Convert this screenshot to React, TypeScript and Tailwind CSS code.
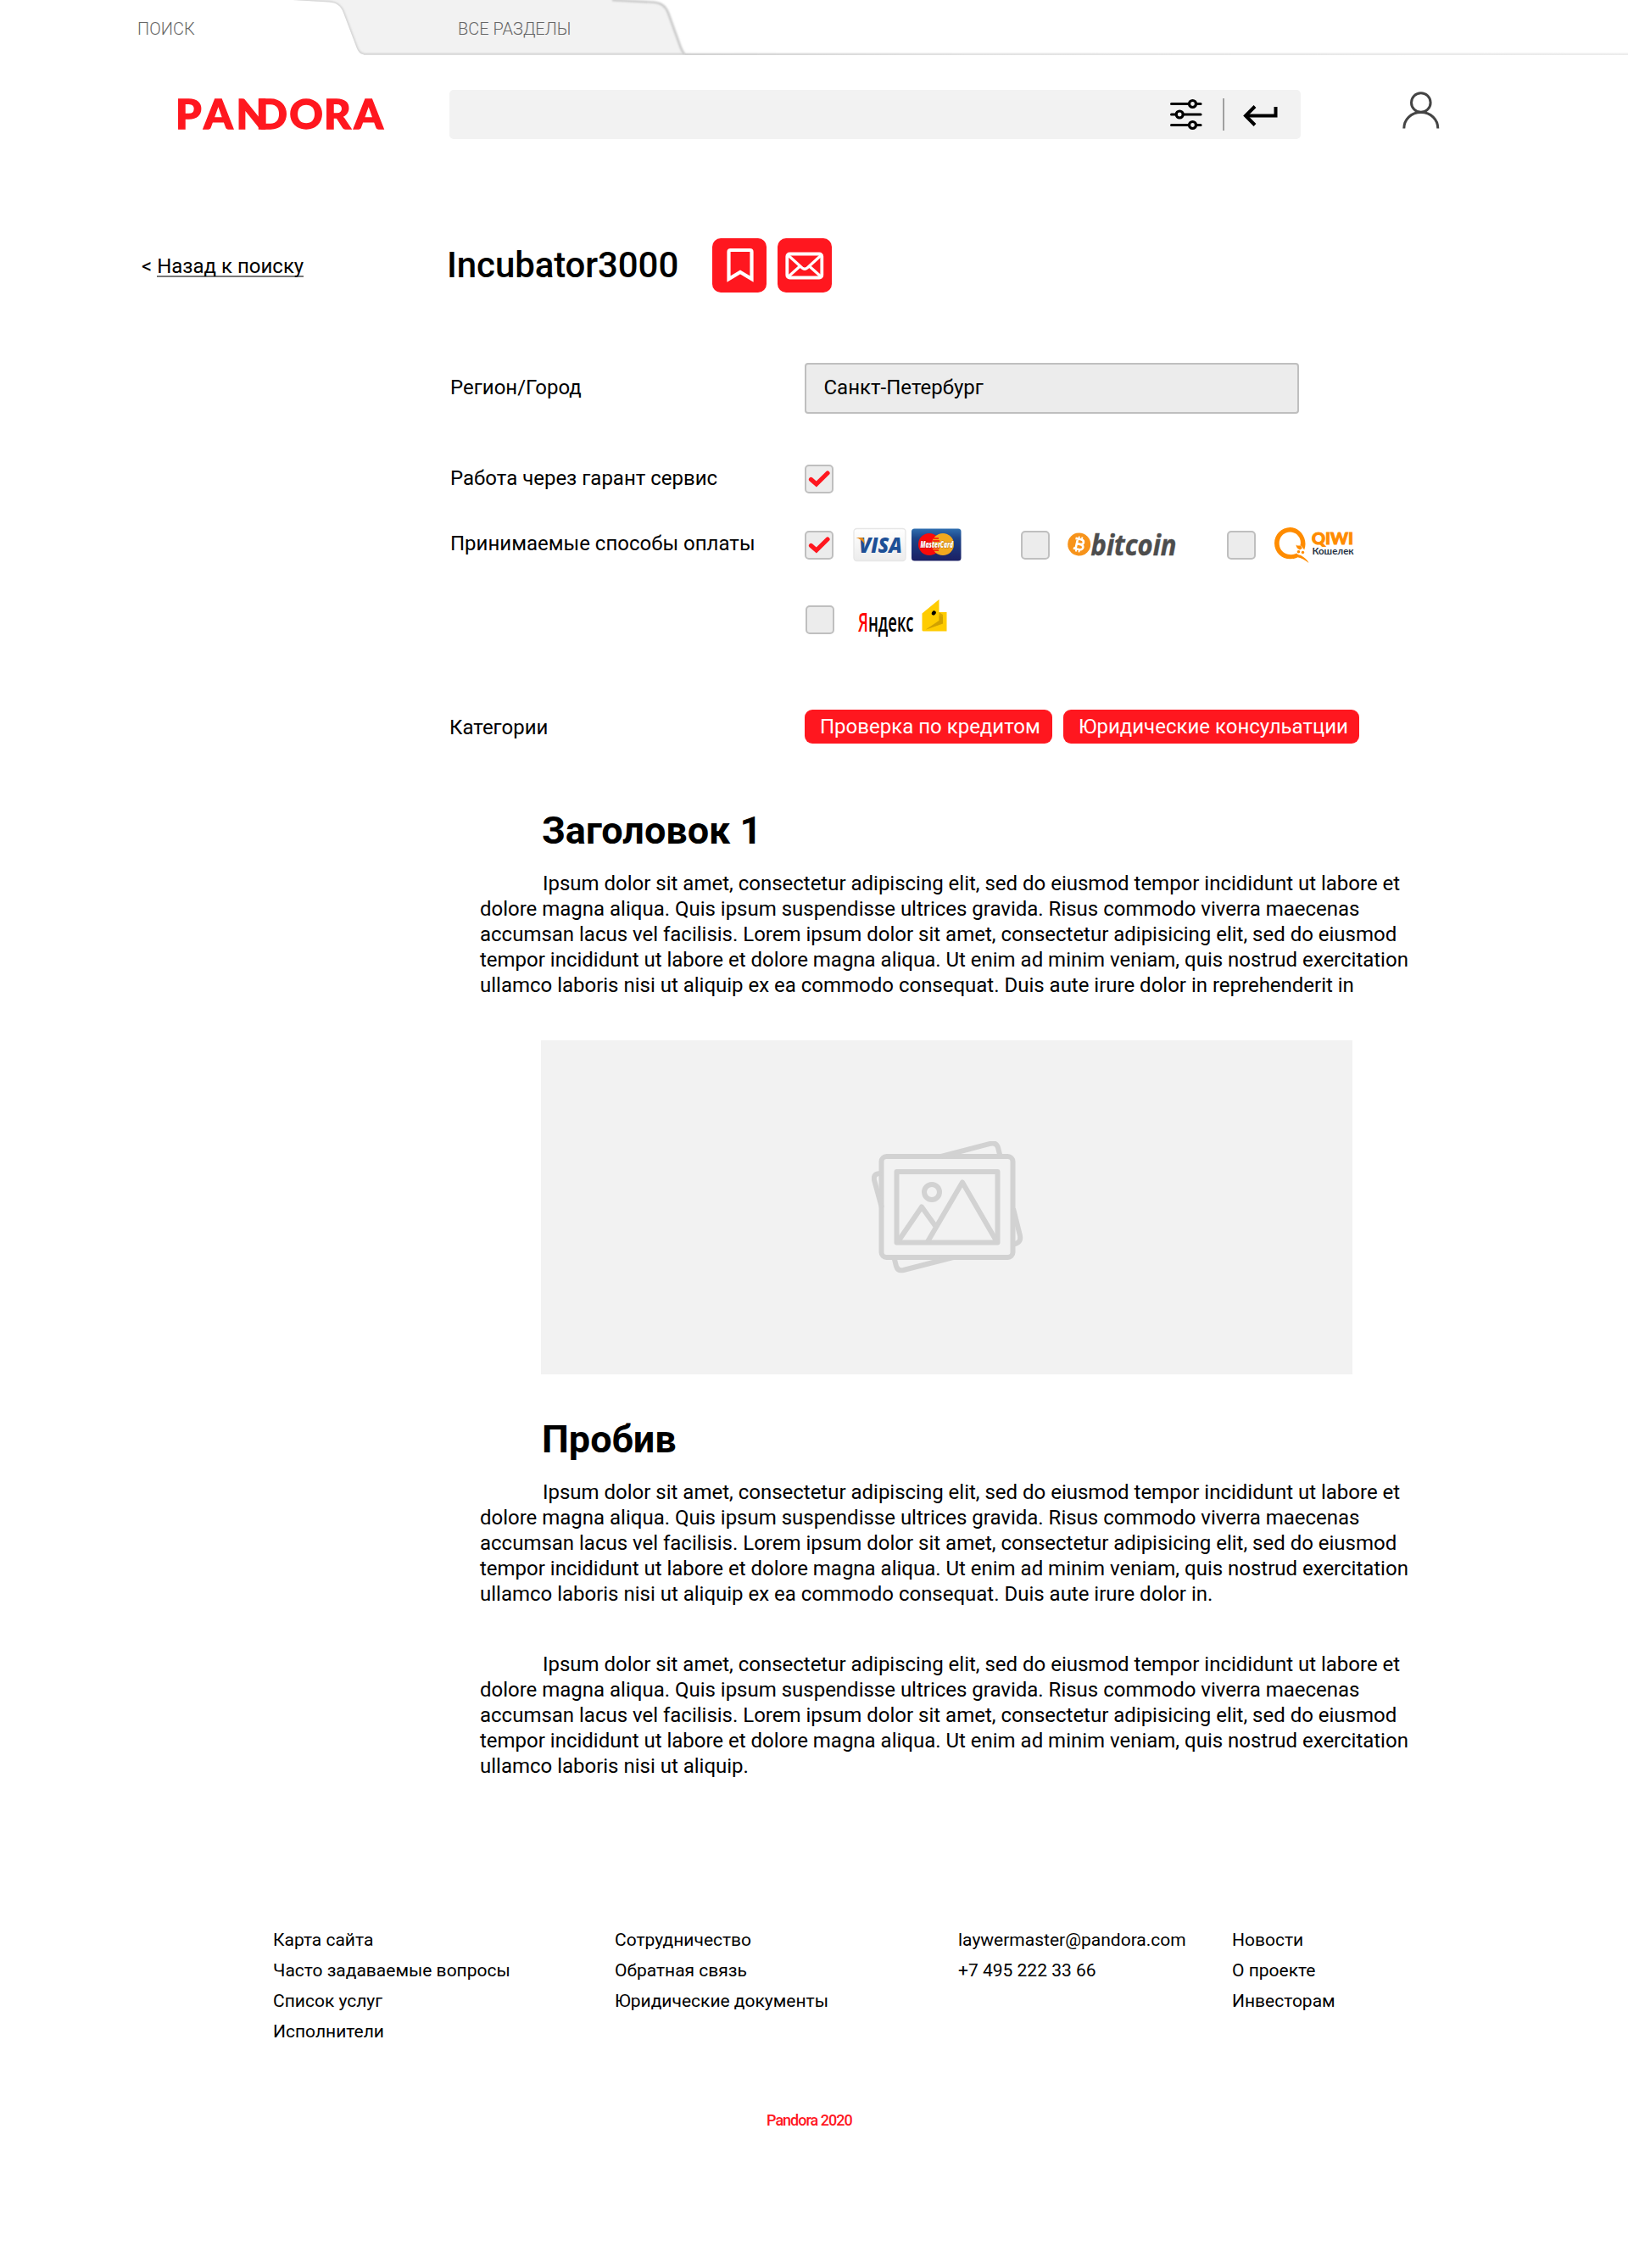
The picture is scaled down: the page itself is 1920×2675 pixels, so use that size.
import React from "react";

const RED = "#ff171f";

const FIRST_EDGE = "M345 0L388 2.6C397 3.2 402 7 405 15L420.500 56C423 62.500 426 64.500 431 64.500";
const SECOND_EDGE = "M722 0L771 2.600C780 3.200 785 7 788 15L801 51C803 57 805 62 808 64.500";

function TabsBackground() {
  return (
    <svg className="absolute inset-0" width="1920" height="66" viewBox="0 0 1920 66" fill="none">
      <defs>
        <linearGradient id="rule" x1="0" x2="1920" y1="0" y2="0" gradientUnits="userSpaceOnUse">
          <stop offset="0.420" stopColor="#c4c4c4" />
          <stop offset="0.600" stopColor="#dadada" />
          <stop offset="1" stopColor="#e6e6e6" />
        </linearGradient>
        <filter id="soft" filterUnits="userSpaceOnUse" x="300" y="-10" width="1640" height="90">
          <feGaussianBlur stdDeviation="1.300" />
        </filter>
        <clipPath id="tab">
          <path d={`${FIRST_EDGE}H808C805 62 803 57 801 51L788 15C785 7 780 3.200 771 2.600L722 0Z`} />
        </clipPath>
        <clipPath id="above">
          <rect width="1920" height="64.700" />
        </clipPath>
      </defs>
      <path d={`${FIRST_EDGE}H808C805 62 803 57 801 51L788 15C785 7 780 3.200 771 2.600L722 0Z`} fill="#f2f2f2" />
      <g clipPath="url(#tab)">
        <path d={`${FIRST_EDGE}H815`} stroke="#d0d0d0" strokeWidth="3" filter="url(#soft)" />
      </g>
      <g clipPath="url(#above)">
        <path d={`${SECOND_EDGE}H1925`} stroke="url(#rule)" strokeWidth="2.400" filter="url(#soft)" />
        <path d="M808 64.200H1920" stroke="url(#rule)" strokeWidth="1" />
        <path d="M429 64.200H808" stroke="#d6d6d6" strokeWidth="1" />
      </g>
    </svg>
  );
}

function Logo() {
  return (
    <svg className="overflow-visible" width="250" height="58" viewBox="0 0 250 58" aria-label="PANDORA">
      <text transform="scale(1.03 1)" y="45.600" x="-2.900 29.300 66.500 89 127.500 167 201.500" fontFamily="Lato" fontWeight="900" fontSize="47.500" fill={RED} stroke={RED} strokeWidth="1.300">
        PANDORA
      </text>
    </svg>
  );
}

function Sliders() {
  return (
    <svg width="38" height="38" viewBox="0 0 38 38" fill="none" stroke="#000" strokeWidth="3.200" strokeLinecap="round">
      <path d="M1.600 6.500H22M31 6.500H36M1.600 19H6.500M16 19H36M1.600 31.500H22M31 31.500H36" />
      <circle cx="26.500" cy="6.500" r="4" />
      <circle cx="11.200" cy="19" r="4" />
      <circle cx="26.500" cy="31.500" r="4" />
    </svg>
  );
}

function ReturnArrow() {
  return (
    <svg width="42" height="26" viewBox="0 0 42 26" fill="none" stroke="#000" strokeWidth="4">
      <path d="M38.500 2V12.500H4" />
      <path d="M14 1.500L3 12.500L14 23.500" />
    </svg>
  );
}

function UserIcon() {
  return (
    <svg width="44" height="44" viewBox="0 0 44 44" fill="none" stroke="#444" strokeWidth="3">
      <circle cx="21.800" cy="13" r="11.300" />
      <path d="M1.800 43.500C1.800 33 10 24.500 21.800 24.500S41.800 33 41.800 43.500" />
    </svg>
  );
}

function Checkbox({ checked = false }: { checked?: boolean }) {
  return (
    <span className="flex h-[34px] w-[34px] shrink-0 items-center justify-center rounded-[5px] border-2 border-[#bfbfbf] bg-[#ececec]">
      {checked && (
        <svg width="26" height="22" viewBox="0 0 26 22" fill="none" stroke={RED} strokeWidth="5.200">
          <path d="M3.500 11.500L9.800 17L23 4" strokeLinecap="round" strokeLinejoin="miter" />
        </svg>
      )}
    </span>
  );
}

function Cards() {
  return (
    <svg className="overflow-visible" width="130" height="42" viewBox="0 0 130 42">
      <defs>
        <linearGradient id="visa" x1="0" x2="0" y1="0" y2="1">
          <stop offset="0" stopColor="#ffffff" />
          <stop offset="1" stopColor="#ececec" />
        </linearGradient>
        <linearGradient id="mc" x1="0" x2="0" y1="0" y2="1">
          <stop offset="0" stopColor="#2f6fb0" />
          <stop offset="0.300" stopColor="#1d4488" />
          <stop offset="1" stopColor="#1b1f63" />
        </linearGradient>
      </defs>
      <rect x="1" y="1.500" width="61" height="38" rx="3.500" fill="url(#visa)" stroke="#e6e6e6" strokeWidth="1.300" />
      <text x="7" y="29.500" fontFamily="Open Sans" fontWeight="800" fontStyle="italic" fontSize="24.500" fill="#1d4f96" textLength="51" lengthAdjust="spacingAndGlyphs">
        VISA
      </text>
      <path d="M3.500 12H10C12 12 12.600 13 13 15L14 20.500C12 16.500 9 14 3.500 12Z" fill="#e58a1a" />
      <rect x="69" y="1.500" width="58.500" height="38" rx="3.500" fill="url(#mc)" />
      <circle cx="90" cy="20" r="13" fill="#fb0a0a" />
      <circle cx="106" cy="20" r="13" fill="#f2a91e" />
      <path d="M95 13H101M94 16H102M94 24H102M95 27H101" stroke="#fb0a0a" strokeWidth="1.500" />
      <text x="79.500" y="24" fontFamily="Open Sans" fontWeight="800" fontStyle="italic" fontSize="10.500" fill="#fff" stroke="#4a1010" strokeWidth="1" strokeOpacity="0.400" paintOrder="stroke" textLength="38.500" lengthAdjust="spacingAndGlyphs">
        MasterCard
      </text>
    </svg>
  );
}

function Bitcoin() {
  return (
    <svg className="overflow-visible" width="132" height="48" viewBox="0 -7 132 48">
      <circle cx="13.700" cy="16" r="13.500" fill="#f7931a" />
      <g transform="rotate(13 13.700 16)" fill="none" stroke="#fff" strokeWidth="2.600">
        <path d="M8 10H14.500C19.500 10 19.500 15.700 14.500 15.700H10.500M14.500 15.700C20.500 15.700 20.500 22 14.500 22H8M10.700 10V22" />
        <path d="M11.800 6.800V10M15.500 6.800V10M11.800 22V25.200M15.500 22V25.200" strokeWidth="1.900" />
      </g>
      <text x="27.500" y="28.500" fontFamily="Open Sans" fontWeight="700" fontStyle="italic" fontSize="34" fill="#4d4d4d" stroke="#4d4d4d" strokeWidth="0.500" textLength="101" lengthAdjust="spacingAndGlyphs">
        bitcoin
      </text>
    </svg>
  );
}

function Qiwi() {
  return (
    <svg width="96" height="44" viewBox="0 0 96 44">
      <path
        fillRule="evenodd"
        fill="#ff8c00"
        d="M18.700 0C8.300 0 0 8.300 0 18.700S8.300 37.300 18.700 37.300C22 37.300 25 36.500 27.500 35.200C32 36.500 36.500 38.500 40.500 42C39 38.500 35.500 35.500 32 33.500C29.500 32 27 32.500 26.500 30.500C22 33 16.500 32.500 12.500 30.500C3 25.500 3.500 10.500 13.500 6.500C24 2.500 33 12 30.500 21L32 22.300L35.200 26.500C40 14 31 0 18.700 0Z"
      />
      <circle cx="28.500" cy="28.800" r="1.800" fill="#ff8c00" />
      <circle cx="33.500" cy="29.500" r="1.700" fill="#ff8c00" />
      <path d="M25.500 20.500C27 22 29 21.500 31 21.500L33 24.500L30 26.500C27.500 25.500 25.500 23.500 25.500 20.500Z" fill="#ff8c00" />
      <text x="44" y="20" fontFamily="Lato" fontWeight="900" fontSize="19.500" fill="#ff8c00" stroke="#ff8c00" strokeWidth="1" textLength="49" lengthAdjust="spacingAndGlyphs">
        QIWI
      </text>
      <text x="44.500" y="32.300" fontFamily="Lato" fontWeight="700" fontSize="11.500" fill="#273345" textLength="49" lengthAdjust="spacingAndGlyphs">
        Кошелек
      </text>
    </svg>
  );
}

function Yandex() {
  return (
    <svg className="overflow-visible" width="110" height="44" viewBox="0 0 110 44">
      <text x="0" y="38.500" fontFamily="Open Sans" fontWeight="600" fontSize="30.500" fill="#000" textLength="65.500" lengthAdjust="spacingAndGlyphs">
        <tspan fill="#ff0000">Я</tspan>ндекс
      </text>
      <path d="M75.500 17.500L95.500 1V16H104.500V38.500H76.500L75.500 37.500Z" fill="#ffcc00" />
      <path d="M95.500 16L100 19V29.500L80 36.500L95.500 26Z" fill="#d9a800" />
      <path d="M80 36.500L95.500 26V20L100 22V29.500Z" fill="#c79a00" opacity="0.500" />
      <ellipse cx="89.300" cy="17" rx="2.300" ry="2.800" transform="rotate(35 89.300 17)" fill="#000" />
    </svg>
  );
}

function Gallery() {
  return (
    <svg width="180" height="160" viewBox="0 0 180 160" fill="none" stroke="#d2d2d2" strokeWidth="6" strokeLinejoin="round">
      <rect x="11.500" y="18" width="155" height="119" rx="6" />
      <rect x="29.500" y="36" width="119" height="83.500" />
      <circle cx="71" cy="60" r="9" />
      <path d="M31 118.500L59 77.500L75.500 100.500M66 118.500L107 48.500L147 117.500" />
      <path d="M82 18L140.500 2.700Q147 1.300 149 7.500L151.500 17.500" />
      <path d="M96 137L37.500 152Q31 153.500 29 147.500L26.500 137.500" />
      <path d="M11.500 38Q1 37.500 3.200 46.500L12 78.500" />
      <path d="M167 79.500L175 111.500Q176.500 120 167.500 121.500" />
    </svg>
  );
}

const PARA = [
  "Ipsum dolor sit amet, consectetur adipiscing elit, sed do eiusmod tempor incididunt ut labore et",
  "dolore magna aliqua. Quis ipsum suspendisse ultrices gravida. Risus commodo viverra maecenas",
  "accumsan lacus vel facilisis. Lorem ipsum dolor sit amet, consectetur adipisicing elit, sed do eiusmod",
  "tempor incididunt ut labore et dolore magna aliqua. Ut enim ad minim veniam, quis nostrud exercitation",
];

function Paragraph({ last, className }: { last: string; className: string }) {
  return (
    <p className={`ml-[566px] w-[1120px] indent-[74px] text-[24px] leading-[30px] tracking-[-0.008px] whitespace-nowrap ${className}`}>
      {[...PARA, last].map((line, i) => (
        <React.Fragment key={i}>
          {i > 0 && <br />}
          {line}
        </React.Fragment>
      ))}
    </p>
  );
}

function FooterColumn({ items, className }: { items: string[]; className: string }) {
  return (
    <ul className={`text-[21px] leading-[36px] whitespace-nowrap ${className}`}>
      {items.map((t) => (
        <li key={t}>{t}</li>
      ))}
    </ul>
  );
}

export default function App() {
  return (
    <div className="h-[2675px] w-[1920px] overflow-hidden bg-white font-['Roboto',sans-serif] text-black">
      <nav className="relative flex h-[65px] text-[20px] leading-[24px] font-light text-[#666]">
        <TabsBackground />
        <a className="relative mt-[22px] ml-[162px] w-[378px]">ПОИСК</a>
        <a className="relative mt-[22px]">ВСЕ РАЗДЕЛЫ</a>
      </nav>

      <header className="mt-[41px] flex h-[58px] items-start pl-[210px]">
        <div className="w-[320px]">
          <Logo />
        </div>
        <div className="flex h-[58px] w-[1004px] items-center rounded-[5px] bg-[#f2f2f2] pl-[850px]">
          <Sliders />
          <span className="ml-6 h-[38px] w-[2px] bg-[#a0a0a0]" />
          <span className="ml-[22px] mt-[3px]">
            <ReturnArrow />
          </span>
        </div>
        <div className="mt-[2px] ml-[120px]">
          <UserIcon />
        </div>
      </header>

      <section className="mt-[117px] flex h-16 items-center pl-[167px] whitespace-nowrap">
        <div className="mt-[2px] w-[360px] text-[24px] leading-[30px]">
          &lt; <a className="inline-block h-[28px] border-b-2 border-[#777]">Назад к поиску</a>
        </div>
        <h1 className="w-[313px] text-[42px] leading-[50px] font-medium tracking-[-0.1px]">Incubator3000</h1>
        <button className="flex h-16 w-16 items-center justify-center rounded-[10px] bg-[#ff171f] pl-px">
          <svg width="34" height="42" viewBox="0 0 34 42" fill="none" stroke="#fff" strokeWidth="4.200">
            <path d="M3.500 37V5Q3.500 3 5.500 3H28.500Q30.500 3 30.500 5V37L17 29Z" />
          </svg>
        </button>
        <button className="ml-[13px] flex h-16 w-16 items-center justify-center rounded-[10px] bg-[#ff171f]">
          <svg width="46" height="34" viewBox="0 0 46 34" fill="none" stroke="#fff" strokeWidth="3.800">
            <rect x="2.300" y="3.500" width="41" height="28" rx="3" />
            <path d="M3.500 5L20 20Q23 22.500 26 20L42.500 5M3.500 30.500L17.500 18M42.500 30.500L28.500 18" strokeWidth="3.200" />
          </svg>
        </button>
      </section>

      <section className="mt-[83px] pl-[531px] text-[24px] leading-[30px] whitespace-nowrap">
        <div className="flex h-[60px] items-center">
          <span className="w-[418px] pb-[2px]">Регион/Город</span>
          <div className="flex h-[60px] w-[583px] items-center rounded-[4px] border-2 border-[#bfbfbf] bg-[#ececec] pb-[2px] pl-[20.5px]">Санкт-Петербург</div>
        </div>
        <div className="mt-[60px] flex h-[34px] items-center">
          <span className="w-[418px] pb-[2px]">Работа через гарант сервис</span>
          <Checkbox checked />
        </div>
        <div className="mt-[44px] flex h-[34px] items-center">
          <span className="w-[418px] pb-[4px]">Принимаемые способы оплаты</span>
          <Checkbox checked />
          <span className="ml-[23px] w-[198px]">
            <Cards />
          </span>
          <Checkbox />
          <span className="ml-[21px] w-[188px]">
            <Bitcoin />
          </span>
          <Checkbox />
          <span className="mt-[2px] ml-[22px]">
            <Qiwi />
          </span>
        </div>
        <div className="mt-[54px] flex h-[34px] items-center pl-[419px]">
          <Checkbox />
          <span className="-mt-[6px] ml-[28px]">
            <Yandex />
          </span>
        </div>
        <div className="mt-[89px] flex h-10 items-center">
          <span className="-ml-px w-[419px] pt-[2px]">Категории</span>
          <span className="h-10 w-[292px] rounded-[9px] bg-[#ff171f] pt-[5px] pl-[18px] text-white">Проверка по кредитом</span>
          <span className="ml-[13px] h-10 w-[349px] rounded-[9px] bg-[#ff171f] pt-[5px] pl-[18px] text-white">Юридические консульатции</span>
        </div>
      </section>

      <article>
        <h2 className="mt-[77px] ml-[639px] text-[45px] leading-[52px] font-bold">Заголовок 1</h2>
        <Paragraph className="mt-[21px]" last="ullamco laboris nisi ut aliquip ex ea commodo consequat. Duis aute irure dolor in reprehenderit in" />
        <div className="mt-[50px] ml-[638px] flex h-[394px] w-[957px] items-center justify-center bg-[#f2f2f2] pt-[3px] pl-[3px]">
          <Gallery />
        </div>
        <h2 className="mt-[51px] ml-[639px] text-[45px] leading-[52px] font-bold">Пробив</h2>
        <Paragraph className="mt-[21px]" last="ullamco laboris nisi ut aliquip ex ea commodo consequat. Duis aute irure dolor in." />
        <Paragraph className="mt-[53px]" last="ullamco laboris nisi ut aliquip." />
      </article>

      <footer>
        <div className="mt-[172px] flex h-36 pl-[322px]">
          <FooterColumn className="w-[403px]" items={["Карта сайта", "Часто задаваемые вопросы", "Список услуг", "Исполнители"]} />
          <FooterColumn className="w-[405px]" items={["Сотрудничество", "Обратная связь", "Юридические документы"]} />
          <FooterColumn className="w-[323px]" items={["laywermaster@pandora.com", "+7 495 222 33 66"]} />
          <FooterColumn className="" items={["Новости", "О проекте", "Инвесторам"]} />
        </div>
        <p className="mt-[75px] pl-[904px] text-[18px] leading-[24px] font-medium tracking-[-1px] text-[#ff171f]">Pandora 2020</p>
      </footer>
    </div>
  );
}
